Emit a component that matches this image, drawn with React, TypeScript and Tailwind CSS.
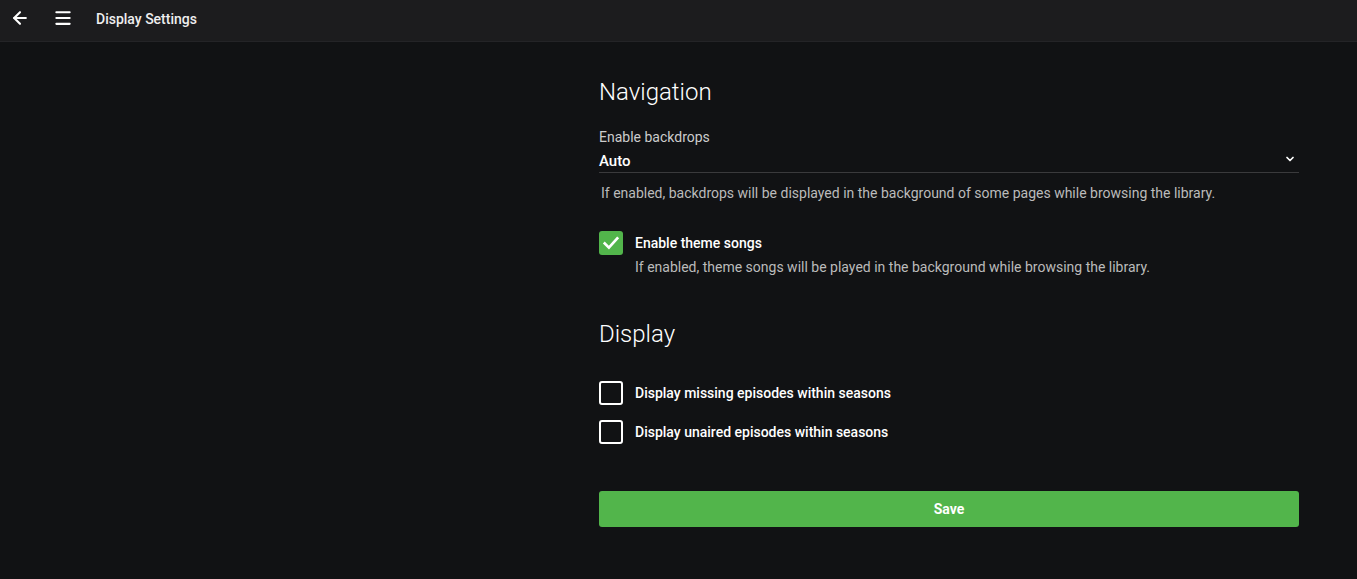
import { ArrowLeft, Menu, ChevronDown } from "lucide-react";

function Checkbox({ checked }: { checked?: boolean }) {
  return checked ? (
    <div className="w-6 h-6 shrink-0 rounded-[3px] bg-[#52b54b] flex items-center justify-center">
      <svg viewBox="0 0 24 24" className="w-[20px] h-[20px]" fill="none" stroke="white" strokeWidth="3.2" strokeLinecap="square">
        <path d="M4.5 12.5l5 5L19.5 6.5" />
      </svg>
    </div>
  ) : (
    <div className="w-6 h-6 shrink-0 rounded-[3px] border-2 border-white" />
  );
}

export default function App() {
  return (
    <div className="min-h-screen bg-[#111214] text-white" style={{ fontFamily: "Roboto, \"Noto Sans\", sans-serif" }}>
      {/* HEADER */}
      <div className="h-[42px] bg-[#1c1c1e] border-b border-[#242427] flex items-center">
        <button className="w-[40px] h-full flex items-center justify-center -mt-[6px]">
          <ArrowLeft size={20} strokeWidth={2.5} />
        </button>
        <button className="w-[46px] h-full flex items-center justify-center -mt-[6px]">
          <Menu size={20} strokeWidth={2.5} />
        </button>
        <h1 className="ml-[10px] text-[14px] font-medium text-[#eeeeee] leading-none -mt-[4px]">Display Settings</h1>
      </div>

      {/* CONTENT */}
      <div className="flex justify-end pr-[58px]">
        <div className="w-[700px] pt-[34px]">
          <h2 className="text-[24px] leading-8 font-light">Navigation</h2>

          <div className="mt-[19px]">
            <div className="text-[14px] text-[#cccccc] leading-5">Enable backdrops</div>
            <div className="relative mt-[2px] h-[22px] border-b border-[#3a3a3c] pb-[23px]">
              <span className="text-[15px] leading-5 font-medium">Auto</span>
              <ChevronDown size={12} strokeWidth={3.5} className="absolute right-[3px] top-[4px]" />
            </div>
            <p className="mt-[10px] ml-[2px] text-[14px] text-[#bbbbbb] leading-5">
              If enabled, backdrops will be displayed in the background of some pages while browsing the library.
            </p>
          </div>

          <div className="mt-[28px] flex gap-3">
            <Checkbox checked />
            <div className="pt-[2px]">
              <div className="text-[14px] leading-5 font-medium">Enable theme songs</div>
              <div className="mt-[4px] text-[14px] leading-5 text-[#bbbbbb]">
                If enabled, theme songs will be played in the background while browsing the library.
              </div>
            </div>
          </div>

          <h2 className="mt-[41px] text-[24px] leading-8 font-light">Display</h2>

          <div className="mt-[31px] flex flex-col gap-[15px]">
            <div className="flex items-center gap-3">
              <Checkbox />
              <span className="text-[14px] font-medium">Display missing episodes within seasons</span>
            </div>
            <div className="flex items-center gap-3">
              <Checkbox />
              <span className="text-[14px] font-medium">Display unaired episodes within seasons</span>
            </div>
          </div>

          <button className="mt-[47px] w-full h-[36px] rounded-[3px] bg-[#52b54b] text-[14px] font-bold text-white">
            Save
          </button>
        </div>
      </div>
    </div>
  );
}
